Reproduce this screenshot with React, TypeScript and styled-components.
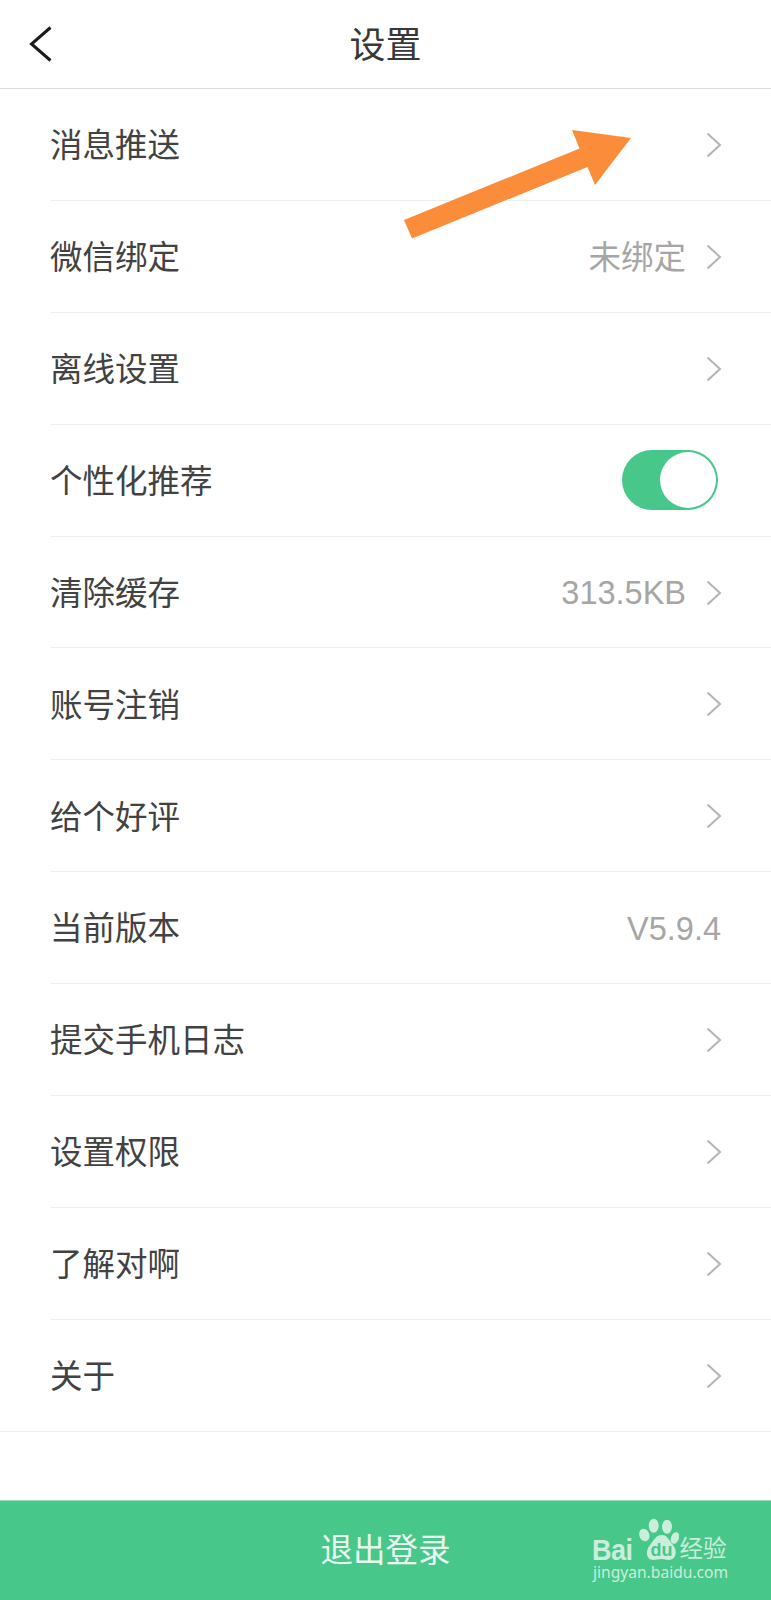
import React from "react";
import styled, { createGlobalStyle } from "styled-components";

const Global = createGlobalStyle`
  html, body { margin: 0; padding: 0; background: #fff; }
  * { box-sizing: border-box; }
`;

const cjk = `"Noto Sans CJK SC", "Noto Sans", sans-serif`;

const Page = styled.div`
  position: relative;
  width: 771px;
  height: 1600px;
  overflow: hidden;
  display: flex;
  flex-direction: column;
  background: #fff;
  font-family: ${cjk};
  color: #3b3b3b;
`;

const Header = styled.header`
  position: relative;
  flex: none;
  height: 89px;
  display: flex;
  align-items: center;
  justify-content: center;
  border-bottom: 1.5px solid #dcdcdc;
  padding-bottom: 5px;
`;

const Title = styled.h1`
  margin: 0;
  font-size: 36px;
  font-weight: 400;
  line-height: 1;
  color: #383838;
`;

const BackButton = styled.button`
  position: absolute;
  left: 28px;
  top: 26px;
  width: 26px;
  height: 36px;
  padding: 0;
  border: 0;
  background: none;
  display: block;
`;

const List = styled.ul`
  list-style: none;
  margin: 0;
  padding: 0;
  display: flex;
  flex-direction: column;
`;

const Row = styled.li<{ $last?: boolean }>`
  flex: none;
  height: 111.9px;
  margin-left: ${(p) => (p.$last ? 0 : "50px")};
  padding-left: ${(p) => (p.$last ? "50px" : 0)};
  padding-right: 48px;
  border-bottom: 1.5px solid #eeeeee;
  display: flex;
  align-items: center;
  justify-content: space-between;
`;

const Label = styled.span`
  margin-top: -2px;
  font-size: 32.5px;
  line-height: 1;
  color: #424242;
`;

const Trailing = styled.span`
  display: flex;
  align-items: center;
  gap: 19px;
`;

const Value = styled.span<{ $bare?: boolean }>`
  margin-top: 3px;
  margin-right: ${(p) => (p.$bare ? "2px" : 0)};
  font-family: "Liberation Sans", ${cjk};
  font-size: 32.5px;
  line-height: 1;
  color: #a6a6a6;
`;

const ChevronIcon = styled.svg`
  display: block;
  margin-top: 1px;
  margin-right: 1px;
`;

const Toggle = styled.span`
  width: 96px;
  height: 60px;
  margin-right: 5px;
  border-radius: 30px;
  background: #48c78a;
  padding: 2px;
  display: flex;
  justify-content: flex-end;
`;

const Knob = styled.span`
  width: 56px;
  height: 56px;
  border-radius: 50%;
  background: #fff;
`;

const Footer = styled.footer`
  margin-top: auto;
  flex: none;
  height: 100px;
  border-top: 1px solid #93dcb9;
  padding-bottom: 4px;
  background: #48c78a;
  display: flex;
  align-items: center;
  justify-content: center;
`;

const LogoutButton = styled.button`
  border: 0;
  padding: 0;
  background: none;
  color: #e9f8f0;
  font-family: ${cjk};
  font-size: 32.5px;
  line-height: 1;
`;

const ArrowMark = styled.svg`
  position: absolute;
  left: 400px;
  top: 125px;
`;

const Watermark = styled.div`
  position: absolute;
  left: 592px;
  top: 1516px;
  width: 140px;
  color: #cbeddc;
  display: flex;
  flex-direction: column;
  align-items: flex-start;
`;

const BrandLine = styled.div`
  height: 46px;
  display: flex;
  align-items: flex-end;
`;

const BrandBai = styled.span`
  font-family: "Liberation Sans", sans-serif;
  font-weight: 700;
  font-size: 27px;
  line-height: 22px;
  letter-spacing: -0.5px;
  transform: scaleY(1.12);
  transform-origin: 50% 90%;
`;

const PawIcon = styled.svg`
  display: block;
  margin-left: 4px;
`;

const BrandJy = styled.span`
  font-family: ${cjk};
  font-size: 23.5px;
  line-height: 30px;
  margin-left: 1px;
`;

const Site = styled.span`
  margin-left: 1px;
  font-family: "Noto Sans", sans-serif;
  font-size: 15.6px;
  line-height: 20px;
  white-space: nowrap;
`;

const Chevron = () => (
  <ChevronIcon width="17" height="26" viewBox="0 0 17 26" fill="none">
    <path d="M2.5 1.5 L15 13 L2.5 24.5" stroke="#b4b4b4" strokeWidth="2" />
  </ChevronIcon>
);

const Paw = () => (
  <PawIcon width="42" height="46" viewBox="0 0 42 46">
    <g fill="#cbeddc">
      <ellipse cx="7.3" cy="19" rx="5" ry="6.5" transform="rotate(-20 7.3 19)" />
      <ellipse cx="16.7" cy="9.7" rx="5" ry="7" />
      <ellipse cx="30" cy="10.7" rx="5" ry="7" />
      <ellipse cx="38" cy="22" rx="4" ry="6" transform="rotate(20 38 22)" />
      <path d="M25 19 C30 19 32 24 36 29 C41 35 39 44 32 44 C29 44 27 43 25 43 C22 43 19 44 16 44 C9 44 8 35 13 29 C17 24 19 19 25 19 Z" />
    </g>
    <text
      x="24.5"
      y="40"
      textAnchor="middle"
      fontFamily="Liberation Sans, sans-serif"
      fontWeight="700"
      fontSize="18"
      fill="#48c78a"
    >
      du
    </text>
  </PawIcon>
);

type Item = { label: string; value?: string; chevron?: boolean; toggle?: boolean };

const items: Item[] = [
  { label: "消息推送", chevron: true },
  { label: "微信绑定", value: "未绑定", chevron: true },
  { label: "离线设置", chevron: true },
  { label: "个性化推荐", toggle: true },
  { label: "清除缓存", value: "313.5KB", chevron: true },
  { label: "账号注销", chevron: true },
  { label: "给个好评", chevron: true },
  { label: "当前版本", value: "V5.9.4" },
  { label: "提交手机日志", chevron: true },
  { label: "设置权限", chevron: true },
  { label: "了解对啊", chevron: true },
  { label: "关于", chevron: true },
];

export default function App() {
  return (
    <Page>
      <Global />
      <Header>
        <BackButton aria-label="返回">
          <svg width="26" height="36" viewBox="0 0 26 36" fill="none">
            <path d="M22.5 1.5 L3.5 18 L22.5 34.5" stroke="#1c1c1c" strokeWidth="3" />
          </svg>
        </BackButton>
        <Title>设置</Title>
      </Header>
      <List>
        {items.map((it, i) => (
          <Row key={it.label} $last={i === items.length - 1}>
            <Label>{it.label}</Label>
            <Trailing>
              {it.value && <Value $bare={!it.chevron}>{it.value}</Value>}
              {it.chevron && <Chevron />}
              {it.toggle && (
                <Toggle>
                  <Knob />
                </Toggle>
              )}
            </Trailing>
          </Row>
        ))}
      </List>
      <Footer>
        <LogoutButton>退出登录</LogoutButton>
      </Footer>
      <ArrowMark width="240" height="120" viewBox="400 125 240 120">
        <polygon
          points="404,220 412,238.5 587.5,167 595,185 631,138 572,130 579.5,148.5"
          fill="#fb8c3a"
        />
      </ArrowMark>
      <Watermark>
        <BrandLine>
          <BrandBai>Bai</BrandBai>
          <Paw />
          <BrandJy>经验</BrandJy>
        </BrandLine>
        <Site>jingyan.baidu.com</Site>
      </Watermark>
    </Page>
  );
}
